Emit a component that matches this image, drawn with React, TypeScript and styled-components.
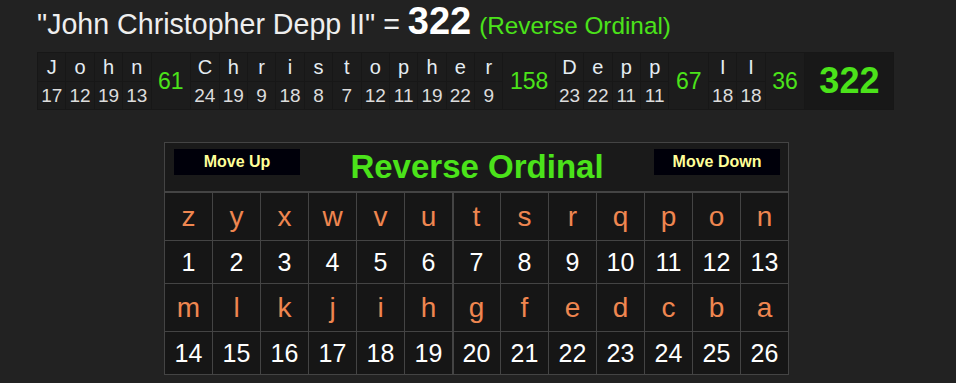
import React from 'react';
import styled, { createGlobalStyle } from 'styled-components';

const GlobalStyle = createGlobalStyle`
    body {
        margin: 0;
        background: #222222;
        font-family: "Liberation Sans", Arial, sans-serif;
    }
`;

const Page = styled.div`
    padding-top: 1px;
`;

const Heading = styled.div`
    margin-left: 37px;
    font-size: 28.6px;
    line-height: 41px;
    color: #eeeeee;
    white-space: nowrap;
`;

const HeadingTotal = styled.span`
    font-size: 38px;
    font-weight: bold;
    color: #ffffff;
`;

const HeadingCipher = styled.span`
    font-size: 24.3px;
    color: #4be31a;
`;

const BreakdownTable = styled.table`
    margin: 6px 0 0 37px;
    border-collapse: separate;
    border-spacing: 1px;
    background: #171717;
`;

const CharCell = styled.td<{ $kind: 'letter' | 'value' }>`
    padding: 0;
    width: 27.4px;
    height: ${(p) => (p.$kind === 'letter' ? '28px' : '27px')};
    background: #1c1c1c;
    color: ${(p) => (p.$kind === 'letter' ? '#e4ecf2' : '#dcdcdc')};
    font-size: ${(p) => (p.$kind === 'letter' ? '20px' : '19px')};
    line-height: 1;
    text-align: center;
    vertical-align: middle;
`;

const SumCell = styled.td<{ $grand?: boolean }>`
    padding: ${(p) => (p.$grand ? '0 14px' : '0 6.5px')};
    background: ${(p) => (p.$grand ? '#181818' : '#1c1c1c')};
    color: #4be31a;
    font-size: ${(p) => (p.$grand ? '36px' : '23px')};
    font-weight: ${(p) => (p.$grand ? 'bold' : 'normal')};
    line-height: 1;
    text-align: center;
    vertical-align: middle;
`;

const CipherBox = styled.div`
    width: 623px;
    margin: 32px 0 0 164px;
    border: 1px solid #444444;
    background: #1a1a1a;
`;

const CipherHead = styled.div`
    height: 49px;
    box-sizing: border-box;
    padding: 0 8px 0 9px;
    display: flex;
    align-items: center;
    justify-content: space-between;
    border-bottom: 1px solid #444444;
`;

const MoveButton = styled.button`
    align-self: flex-start;
    margin-top: 6px;
    width: 126px;
    height: 26px;
    padding: 0;
    border: none;
    background: #00000a;
    color: #ffff99;
    font-family: "Liberation Sans", Arial, sans-serif;
    font-size: 16px;
    font-weight: bold;
    cursor: pointer;
`;

const CipherTitle = styled.div`
    color: #4be31a;
    font-size: 33px;
    font-weight: bold;
    line-height: 1.15;
`;

const CipherGrid = styled.div`
    display: grid;
    grid-template-columns: repeat(13, 47px);
    grid-template-rows: 47px 42px 47px 42px;
    gap: 1px;
    padding-top: 1px;
    background: #444444;
`;

const GridCell = styled.div<{ $kind: 'letter' | 'number'; $split?: boolean }>`
    display: flex;
    align-items: center;
    justify-content: center;
    background: #161616;
    color: ${(p) => (p.$kind === 'letter' ? '#ef8650' : '#ffffff')};
    font-size: ${(p) => (p.$kind === 'letter' ? '28px' : '25px')};
    box-shadow: ${(p) => (p.$split ? 'inset 1px 0 #444444' : 'none')};
`;

const words = ['John', 'Christopher', 'Depp', 'II'];

// reverse ordinal: a = 26 ... z = 1
const valueOf = (ch: string) => 27 - (ch.toLowerCase().charCodeAt(0) - 96);

const wordSum = (w: string) => w.split('').reduce((s, c) => s + valueOf(c), 0);

const total = words.reduce((s, w) => s + wordSum(w), 0);

const alphabet = 'zyxwvutsrqponmlkjihgfedcba'.split('');

const App = () => {
    const halves = [alphabet.slice(0, 13), alphabet.slice(13)];

    return (
        <Page>
            <GlobalStyle />
            <Heading>
                "{words.join(' ')}" = <HeadingTotal>{total}</HeadingTotal>{' '}
                <HeadingCipher>(Reverse Ordinal)</HeadingCipher>
            </Heading>

            {/* letter by letter breakdown */}
            <BreakdownTable>
                <tbody>
                    <tr>
                        {words.map((w) => (
                            <React.Fragment key={w}>
                                {w.split('').map((c, i) => (
                                    <CharCell key={i} $kind="letter">{c}</CharCell>
                                ))}
                                <SumCell rowSpan={2}>{wordSum(w)}</SumCell>
                            </React.Fragment>
                        ))}
                        <SumCell rowSpan={2} $grand>{total}</SumCell>
                    </tr>
                    <tr>
                        {words.map((w) =>
                            w.split('').map((c, i) => (
                                <CharCell key={w + i} $kind="value">{valueOf(c)}</CharCell>
                            ))
                        )}
                    </tr>
                </tbody>
            </BreakdownTable>

            {/* cipher chart */}
            <CipherBox>
                <CipherHead>
                    <MoveButton>Move Up</MoveButton>
                    <CipherTitle>Reverse Ordinal</CipherTitle>
                    <MoveButton>Move Down</MoveButton>
                </CipherHead>
                <CipherGrid>
                    {halves.map((row) => (
                        <React.Fragment key={row[0]}>
                            {row.map((c, i) => (
                                <GridCell key={c} $kind="letter" $split={i === 6}>{c}</GridCell>
                            ))}
                            {row.map((c, i) => (
                                <GridCell key={c + 'n'} $kind="number" $split={i === 6}>{valueOf(c)}</GridCell>
                            ))}
                        </React.Fragment>
                    ))}
                </CipherGrid>
            </CipherBox>
        </Page>
    );
};

export default App;
